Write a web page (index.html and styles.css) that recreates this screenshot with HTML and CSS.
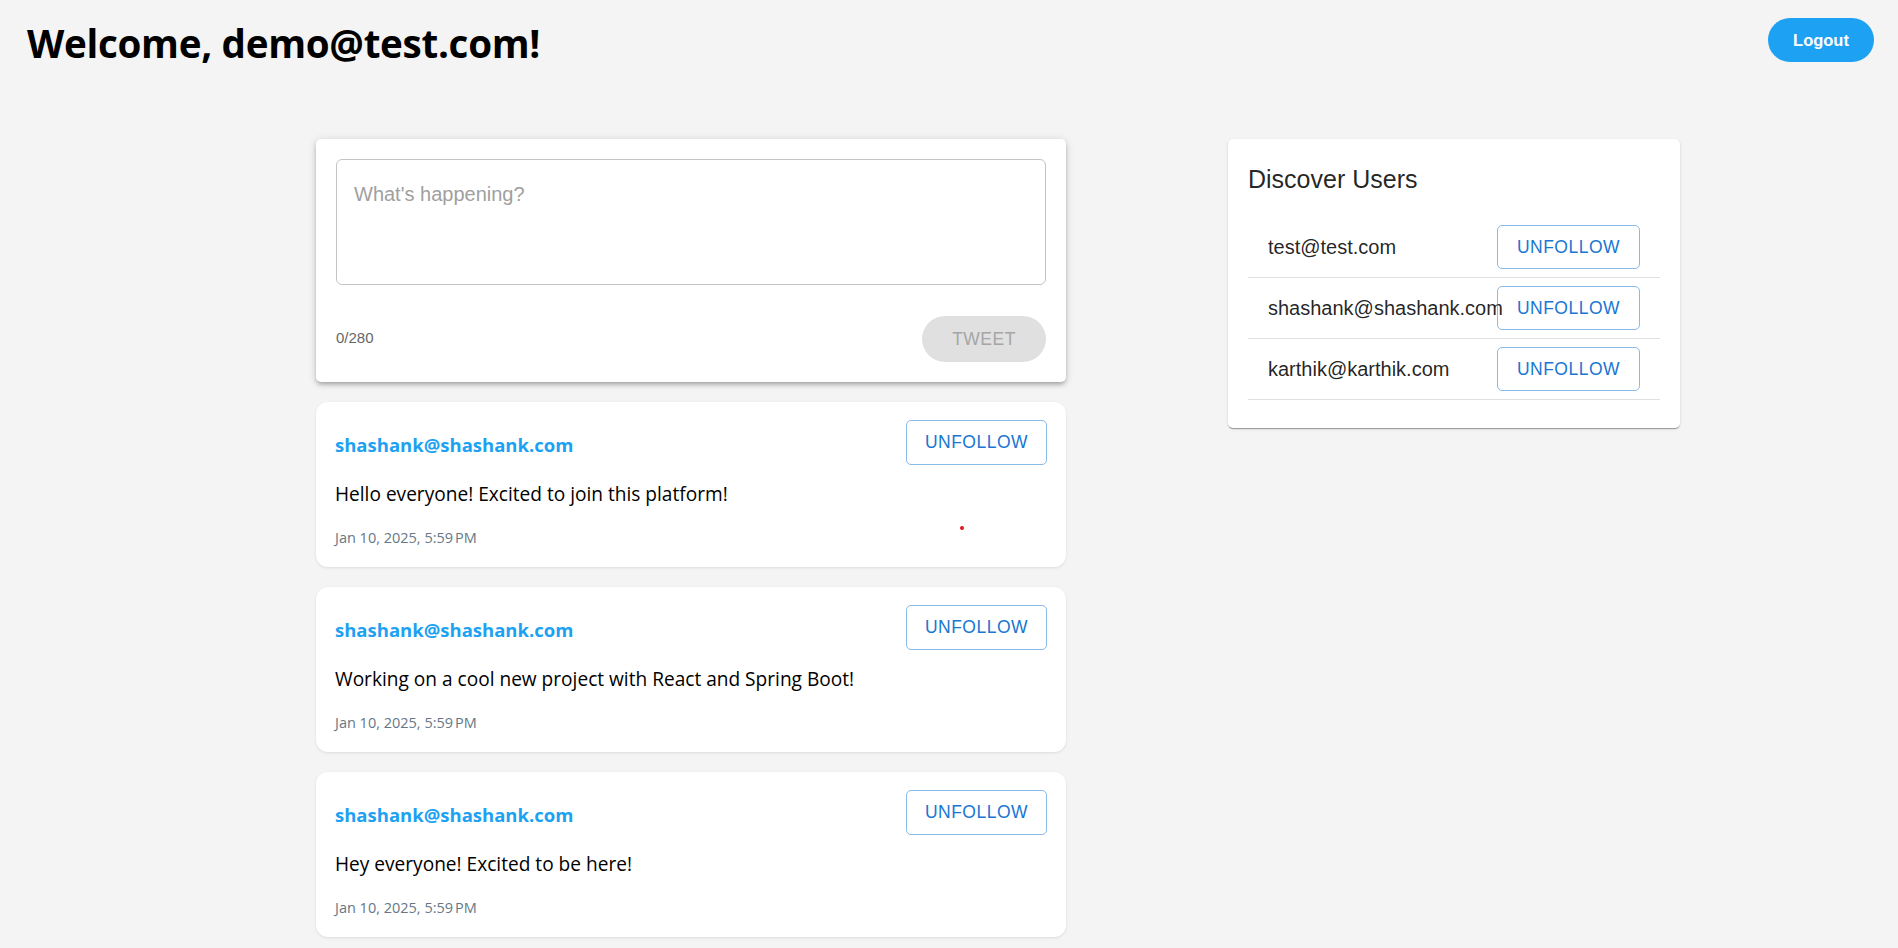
FILE: index.html
```html
<!DOCTYPE html>
<html lang="en">
<head>
<meta charset="utf-8">
<title>Home</title>
<link rel="stylesheet" href="styles.css">
</head>
<body>
<header class="topbar">
  <h1 class="welcome">Welcome, demo@test.com!</h1>
  <button class="logout">Logout</button>
</header>
<main class="layout">
  <section class="feed">
    <div class="composer">
      <div class="composer-field">What's happening?</div>
      <div class="composer-footer">
        <span class="counter">0/280</span>
        <button class="tweet-btn" disabled>TWEET</button>
      </div>
    </div>

    <article class="tweet">
      <div class="tweet-head">
        <span class="tweet-user">shashank@shashank.com</span>
        <button class="outline-btn">UNFOLLOW</button>
      </div>
      <p class="tweet-text">Hello everyone! Excited to join this platform!</p>
      <div class="tweet-date">Jan 10, 2025, 5:59&#8239;PM</div>
      <span class="cursor-dot"></span>
    </article>

    <article class="tweet">
      <div class="tweet-head">
        <span class="tweet-user">shashank@shashank.com</span>
        <button class="outline-btn">UNFOLLOW</button>
      </div>
      <p class="tweet-text">Working on a cool new project with React and Spring Boot!</p>
      <div class="tweet-date">Jan 10, 2025, 5:59&#8239;PM</div>
    </article>

    <article class="tweet">
      <div class="tweet-head">
        <span class="tweet-user">shashank@shashank.com</span>
        <button class="outline-btn">UNFOLLOW</button>
      </div>
      <p class="tweet-text">Hey everyone! Excited to be here!</p>
      <div class="tweet-date">Jan 10, 2025, 5:59&#8239;PM</div>
    </article>
  </section>

  <aside class="discover">
    <h2 class="discover-title">Discover Users</h2>
    <ul class="user-list">
      <li class="user-item"><span class="user-name">test@test.com</span><button class="outline-btn side">UNFOLLOW</button></li>
      <li class="user-item"><span class="user-name">shashank@shashank.com</span><button class="outline-btn side">UNFOLLOW</button></li>
      <li class="user-item"><span class="user-name">karthik@karthik.com</span><button class="outline-btn side">UNFOLLOW</button></li>
    </ul>
  </aside>
</main>
</body>
</html>
```

FILE: styles.css
```css
* { box-sizing: border-box; }

html, body {
  margin: 0;
  padding: 0;
  background: #f4f4f4;
}

body {
  font-family: "Open Sans", "Noto Sans", sans-serif;
  color: #000;
  min-height: 948px;
}

.topbar {
  display: flex;
  justify-content: space-between;
  align-items: flex-start;
  padding: 13px 24px 0 27px;
}

.welcome {
  margin: 0;
  font-family: "Open Sans", sans-serif;
  font-weight: 700;
  font-size: 38.6px;
  line-height: 60px;
  letter-spacing: -0.3px;
}

.logout {
  margin-top: 5px;
  width: 106px;
  height: 44px;
  border: none;
  border-radius: 22px;
  background: #1da1f2;
  color: #fff;
  font-family: "Liberation Sans", Arial, sans-serif;
  font-weight: 700;
  font-size: 16.5px;
  cursor: pointer;
}

.layout {
  display: flex;
  align-items: flex-start;
  gap: 162px;
  padding-left: 316px;
  margin-top: 66px;
}

.feed {
  width: 750px;
  display: flex;
  flex-direction: column;
  gap: 20px;
}

/* composer */
.composer {
  background: #fff;
  border-radius: 5px;
  padding: 20px;
  box-shadow: 0 3px 4px -2px rgba(0,0,0,0.2), 0 3px 5px 0 rgba(0,0,0,0.14), 0 1px 10px 0 rgba(0,0,0,0.12);
}

.composer-field {
  height: 126px;
  border: 1px solid #c4c4c4;
  border-radius: 6px;
  padding: 20px 17px;
  font-family: "Liberation Sans", Arial, sans-serif;
  font-size: 20px;
  line-height: 28.75px;
  color: #a0a0a0;
}

.composer-footer {
  display: flex;
  justify-content: space-between;
  align-items: center;
  margin-top: 31px;
}

.counter {
  font-family: "Liberation Sans", Arial, sans-serif;
  font-size: 15px;
  color: #666;
  margin-bottom: 4px;
}

.tweet-btn {
  width: 124px;
  height: 46px;
  border: none;
  border-radius: 23px;
  background: #e0e0e0;
  color: #a6a6a6;
  font-family: "Liberation Sans", Arial, sans-serif;
  font-size: 17.5px;
  letter-spacing: 0.5px;
}

/* tweets */
.tweet {
  position: relative;
  background: #fff;
  border-radius: 12px;
  padding: 18px 19px 19px 19px;
  box-shadow: 0 1px 3px rgba(0,0,0,0.1);
}

.tweet-head {
  display: flex;
  justify-content: space-between;
  align-items: center;
}

.tweet-user {
  color: #1da1f2;
  font-weight: 700;
  font-size: 18.5px;
  padding-top: 4px;
}

.outline-btn {
  width: 141px;
  height: 45px;
  background: transparent;
  border: 1px solid rgba(25,118,210,0.5);
  border-radius: 5px;
  color: #1976d2;
  font-family: "Liberation Sans", Arial, sans-serif;
  font-size: 17.5px;
  font-weight: 400;
  letter-spacing: 0.5px;
  padding: 0;
}

.tweet-text {
  margin: 16px 0 0;
  font-size: 19.1px;
  line-height: 27px;
}

.tweet-date {
  margin-top: 20px;
  font-size: 14.5px;
  line-height: 20px;
  color: #657786;
}

.cursor-dot {
  position: absolute;
  left: 644px;
  top: 124px;
  width: 4px;
  height: 4px;
  border-radius: 50%;
  background: #e0141e;
}

/* discover */
.discover {
  width: 452px;
  background: #fff;
  border-radius: 5px;
  padding: 20px;
  box-shadow: 0 2px 1px -1px rgba(0,0,0,0.2), 0 1px 1px 0 rgba(0,0,0,0.14), 0 1px 3px 0 rgba(0,0,0,0.12);
}

.discover-title {
  margin: 0;
  font-family: "Liberation Sans", Arial, sans-serif;
  font-weight: 400;
  font-size: 25px;
  line-height: 40px;
  color: rgba(0,0,0,0.87);
}

.user-list {
  list-style: none;
  margin: 8px 0 0;
  padding: 10px 0 8px;
}

.user-item {
  position: relative;
  padding: 15px 20px;
  border-bottom: 1px solid #e0e0e0;
  font-family: "Liberation Sans", Arial, sans-serif;
  font-size: 20px;
  line-height: 30px;
  color: rgba(0,0,0,0.87);
}

.user-name {
  white-space: nowrap;
}

.outline-btn.side {
  position: absolute;
  right: 20px;
  top: 50%;
  transform: translateY(-50%);
  width: 143px;
  height: 44px;
}
```
